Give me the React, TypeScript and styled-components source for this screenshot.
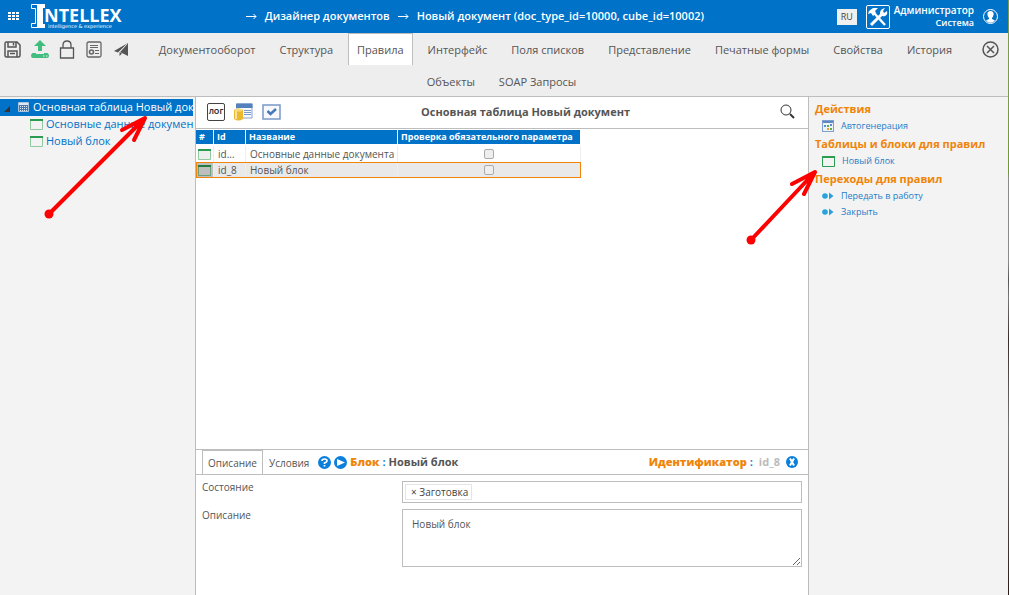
import React from "react";
import styled, { createGlobalStyle, css } from "styled-components";

const BLUE = "#0072c8";
const ORANGE = "#f08408";
const LINE = "#bdbdbd";

const GlobalStyle = createGlobalStyle`
  *, *::before, *::after { box-sizing: border-box; }
  body { margin: 0; background: #fff; color: #555; font: 10px/16px "Open Sans", "Noto Sans", sans-serif; }
  button, input, textarea { font: inherit; color: inherit; }
  button { padding: 0; border: 0; background: none; cursor: pointer; }
  a { text-decoration: none; color: inherit; }
  svg { display: block; flex: none; }
`;

const Page = styled.div`
  position: relative;
  min-height: 100vh;
  display: flex;
  flex-direction: column;
  overflow: hidden;
  border-right: 1px solid #808080;
  border-image: linear-gradient(#7d9c4a 0 15%, #6f9a2c 29%, #8a8a8a 30% 44%, #555 47%, #777 50%, #3a2c28 57%, #777 72%, #2c1a16 100%) 1;
`;

const Header = styled.header`
  display: flex;
  align-items: center;
  height: 33px;
  padding: 0 10px 0 7px;
  background: ${BLUE};
  color: #fff;
`;

const IconButton = styled.button`
  display: flex;
  align-items: center;
  justify-content: center;
`;

const Logo = styled.a`
  display: block;
  margin-left: 10px;
`;

const Crumbs = styled.nav`
  flex: 1;
  display: flex;
  justify-content: center;
  align-items: center;
  gap: 8px;
  padding: 0 10px 2px 0;
  font-size: 11px;
  font-weight: 600;
  white-space: nowrap;
`;

const Language = styled.button`
  width: 20px;
  height: 16px;
  margin-right: 9px;
  background: #f0f0f0;
  color: #444;
  font-size: 9px;
  line-height: 14px;
`;

const User = styled.div`
  margin: 0 9px 0 4px;
  text-align: right;
  font-size: 9px;
  line-height: 13px;
  font-weight: 600;
  strong { display: block; font-size: 10px; line-height: 12px; font-weight: 600; }
`;

const Toolbar = styled.div`
  height: 64px;
  padding: 0 8px 0 3px;
  background: #eee;
  border-bottom: 1px solid ${LINE};
`;

const Tools = styled.div<{ $side: "left" | "right" }>`
  float: ${(p) => p.$side};
  display: flex;
  gap: 8px;
  padding: 6px 0 0 0;
`;

const Tool = styled(IconButton)`
  width: 19px;
  height: 20px;
`;

const Tabs = styled.nav`
  text-align: center;
  font-size: 0;
`;

const Tab = styled.a<{ $active?: boolean }>`
  display: inline-block;
  vertical-align: top;
  height: 32px;
  padding: 0 8px;
  margin: 0 3px;
  border: 1px solid transparent;
  border-bottom: 0;
  font-size: 11px;
  line-height: 32px;
  white-space: nowrap;
  ${(p) => p.$active && css`background: #fff; border-color: ${LINE};`}
`;

const Body = styled.div`
  flex: 1;
  display: grid;
  grid-template-columns: 195px minmax(0, 1fr) 199px;
`;

const Tree = styled.aside`
  padding: 2px 2px 0 0;
  background: #f3f3f3;
`;

const TreeRow = styled.a<{ $selected?: boolean }>`
  display: flex;
  align-items: center;
  height: 17px;
  padding: 0 0 1px ${(p) => (p.$selected ? 4 : 30)}px;
  font-size: 11px;
  white-space: nowrap;
  color: ${BLUE};
  gap: 3px;
  ${(p) => p.$selected && css`background: ${BLUE}; color: #fff; font-weight: 500;`}
`;

const Main = styled.main`
  display: flex;
  flex-direction: column;
  border: solid ${LINE};
  border-width: 0 1px;
`;

const MainBar = styled.div`
  display: flex;
  align-items: center;
  height: 32px;
  padding: 0 13px 2px 11px;
  gap: 9px;
  border-bottom: 1px solid ${LINE};
`;

const Title = styled.h1`
  flex: 1;
  margin: 0;
  padding-right: 10px;
  text-align: center;
  font-size: 11px;
  font-weight: 700;
`;

const LogButton = styled.button`
  width: 18px;
  height: 18px;
  border: 1px solid #444;
  border-radius: 2px;
  background: #fff;
  color: #333;
  font-size: 7px;
  line-height: 14px;
  font-weight: 700;
`;

const Table = styled.table`
  width: 385px;
  margin-top: 1px;
  table-layout: fixed;
  border-collapse: separate;
  border-spacing: 0;
  text-align: left;
`;

const Th = styled.th<{ $w: number }>`
  width: ${(p) => p.$w}px;
  height: 16px;
  padding: 0 0 0 3px;
  background: ${BLUE};
  border: solid #fff;
  border-width: 0 1px 2px 0;
  color: #fff;
  font-size: 9px;
  font-weight: 700;
  line-height: 14px;
  white-space: nowrap;
`;

const Td = styled.td<{ $center?: boolean }>`
  height: 16px;
  padding: 0 0 0 4px;
  border-right: 1px solid #eee;
  line-height: 14px;
  white-space: nowrap;
  text-align: ${(p) => (p.$center ? "center" : "left")};
`;

const Tr = styled.tr<{ $selected?: boolean }>`
  td:first-child { padding-left: 2px; }
  td:last-child { padding: 0; }
  ${(p) => p.$selected && css`
    background: #e9e9e9;
    outline: 1px solid ${ORANGE};
    outline-offset: -1px;
    td:first-child { background: #bebebe; }
  `}
`;

const Check = styled.input`
  appearance: none;
  display: block;
  width: 10px;
  height: 10px;
  margin: 0 auto;
  border: 1px solid #aaa;
  border-radius: 2px;
  background: #eee;
`;

const Details = styled.section`
  margin-top: auto;
  height: 146px;
  border-top: 1px solid ${LINE};
`;

const DetailsBar = styled.div`
  display: flex;
  align-items: center;
  height: 25px;
  padding: 0 10px 0 6px;
  border-bottom: 1px solid ${LINE};
`;

const DetailTab = styled.button<{ $active?: boolean }>`
  align-self: stretch;
  padding: 0 5px;
  border: 1px solid ${(p) => (p.$active ? LINE : "transparent")};
  border-bottom: 0;
`;

const Heading = styled.h2`
  display: flex;
  flex: 1;
  align-items: center;
  gap: 3px;
  margin: 0 0 0 3px;
  font-size: 11px;
  b { color: ${ORANGE}; }
  i { font-style: normal; color: #1684dc; }
`;

const Identifier = styled.div`
  display: flex;
  align-items: center;
  gap: 3px;
  margin-right: 6px;
  font-size: 11px;
  font-weight: 700;
  color: #bbb;
  b { color: ${ORANGE}; }
  i { font-style: normal; color: #1684dc; margin-right: 3px; }
`;

const Field = styled.div`
  display: grid;
  grid-template-columns: 200px minmax(0, 1fr);
  margin: 6px 6px 0;
`;

const Label = styled.label`
  line-height: 13px;
`;

const TagBox = styled.div`
  display: flex;
  height: 22px;
  padding: 2px;
  border: 1px solid ${LINE};
`;

const Tag = styled.button`
  padding: 0 3px 0 5px;
  border: 1px solid #e4e4e4;
  line-height: 14px;
  color: #444;
`;

const TagInput = styled.input`
  flex: 1;
  min-width: 0;
  border: 0;
  outline: 0;
`;

const TextArea = styled.textarea`
  display: block;
  width: 100%;
  height: 58px;
  padding: 6px 9px;
  border: 1px solid ${LINE};
  resize: vertical;
`;

const Side = styled.aside`
  padding: 2px 6px;
  background: #f3f3f3;
`;

const SideTitle = styled.h2`
  margin: 0;
  font-size: 11px;
  line-height: 19px;
  color: ${ORANGE};
  white-space: nowrap;
`;

const SideLink = styled.a`
  display: flex;
  align-items: center;
  gap: 7px;
  height: 16px;
  padding-left: 7px;
  font-size: 9px;
  color: #267cc8;
`;

const Overlay = styled.svg<{ $x: number; $y: number }>`
  position: absolute;
  left: ${(p) => p.$x}px;
  top: ${(p) => p.$y}px;
  pointer-events: none;
`;

const Block = ({ edge = "#8fcb9f", fill = "none", bar = "#2a9d50" }) => (
  <svg width="13" height="12" viewBox="0 0 13 12">
    <path d="M.5 2V11.500H12.500V2" fill={fill} stroke={edge} />
    <path d="M0 1H13V3H0Z" fill={bar} />
  </svg>
);

const Go = () => (
  <svg width="12" height="10" viewBox="0 0 12 10">
    <circle cx="3" cy="5" r="2.800" fill="#25a4d9" />
    <path d="M7 1.500L11.500 5L7 8.500Z" fill="#2a9fd8" />
  </svg>
);

const Arrow = () => (
  <svg width="11" height="8" viewBox="0 0 11 8" fill="none" stroke="#fff">
    <path d="M0 4.500H10M7.500 2L10 4.500L7.500 7" />
  </svg>
);

const Pointer = ({ x, y, w, h }: { x: number; y: number; w: number; h: number }) => (
  <Overlay $x={x} $y={y} width={w + 10} height={h + 10} stroke="red" fill="none">
    <circle cx="5" cy={h + 5} r="4.500" fill="red" stroke="none" />
    <path d={`M5 ${h + 5}L${w + 4} 6M${w - 18} 17L${w + 5} 5L${w - 6} 27`} strokeWidth="4" strokeLinecap="round" strokeLinejoin="round" />
  </Overlay>
);

const tabs = ["Документооборот", "Структура", "Правила", "Интерфейс", "Поля списков", "Представление", "Печатные формы", "Свойства", "История", "Объекты", "SOAP Запросы"];

export default function App() {
  return (
    <Page>
      <GlobalStyle />
      <Header>
        <IconButton aria-label="Меню">
          <svg width="13" height="11" viewBox="0 0 13 11" fill="#fff">
            {[0, 3, 6].map((y) => [1, 5, 9].map((x) => <rect key={`${x}-${y}`} x={x} y={y + 1} width="3" height="2" />))}
          </svg>
        </IconButton>
        <Logo href="#" aria-label="Intellex">
          <svg width="93" height="27" viewBox="0 0 93 27" fill="#fff">
            <path d="M7 1H15V5H13V21H15V25H7Z" />
            <path d="M7 1.500H1.500V5.500H5.500V20.500H1.500V24.500H7" fill="none" stroke="#fff" />
            <text x="14" y="19" fontFamily="Open Sans, sans-serif" fontSize="18" fontWeight="700">NTELLEX</text>
            <text x="18" y="25" fontFamily="DejaVu Sans, sans-serif" fontSize="5">intelligence &amp; experience</text>
          </svg>
        </Logo>
        <Crumbs>
          <Arrow /><a href="#">Дизайнер документов</a>
          <Arrow /><a href="#">Новый документ (doc_type_id=10000, cube_id=10002)</a>
        </Crumbs>
        <Language>RU</Language>
        <IconButton aria-label="Настройки">
          <svg width="24" height="24" viewBox="0 0 24 24" fill="none" stroke="#fff">
            <rect x=".5" y=".5" width="23" height="23" rx="1.500" />
            <path d="M8 8L19 20" strokeWidth="2.500" />
            <path d="M17 8L5 20" strokeWidth="3" />
            <path d="M2 9L3 6L7 3L12 3L9 6L10 8L7 11L5 8Z" fill="#fff" stroke="none" />
            <path d="M19 3L17 6L18 8L21 6Q22 10 19 11Q15 12 14 8Q14 4 19 3Z" fill="#fff" stroke="none" />
          </svg>
        </IconButton>
        <User><strong>Администратор</strong>Система</User>
        <IconButton aria-label="Профиль">
          <svg width="15" height="15" viewBox="0 0 15 15">
            <circle cx="7.500" cy="7.500" r="7" fill="none" stroke="#fff" />
            <path d="M7.500 2C10 2 11 4 10.500 6Q10 8 9 9V10L12 11.500Q7.500 16 3 11.500L6 10V9Q5 8 4.500 6C4 4 5 2 7.500 2Z" fill="#fff" />
          </svg>
        </IconButton>
      </Header>

      <Toolbar>
        <Tools $side="left">
          <Tool aria-label="Сохранить">
            <svg width="17" height="17" viewBox="0 0 17 17" fill="none" stroke="#555" strokeWidth="1.500">
              <path d="M2.500 1H13L16 4V14.500Q16 16 14.500 16H2.500Q1 16 1 14.500V2.500Q1 1 2.500 1ZM4 1V6H12V1M4 16V10H13V16M9.500 2V4.500M6 12.500H11" />
            </svg>
          </Tool>
          <Tool aria-label="Загрузить">
            <svg width="18" height="18" viewBox="0 0 18 18" fill="#42bd80">
              <path d="M9 0L15 6H11V11H7V6H3Z" />
              <path d="M1.500 13H5V14H13V13H16.500Q18 14 18 15.500Q18 18 16 18H2Q0 18 0 15.500Q0 14 1.500 13Z" />
              <path d="M12 16H13.500M15 16H16.500" stroke="#eee" />
            </svg>
          </Tool>
          <Tool aria-label="Заблокировать">
            <svg width="16" height="19" viewBox="0 0 16 19" fill="none" stroke="#555" strokeWidth="1.300">
              <path d="M1.500 8H14.500V18H1.500ZM4 8V5Q4 1 8 1Q12 1 12 5V8" />
            </svg>
          </Tool>
          <Tool aria-label="Документ">
            <svg width="16" height="17" viewBox="0 0 16 17" fill="none" stroke="#666">
              <rect x="1" y="1" width="14" height="15" rx="1.500" strokeWidth="1.300" />
              <path d="M4 4.500H12M4 6.500H12M9 9.500H13M9 12.500H13" />
              <circle cx="5.500" cy="11" r="2" strokeWidth="1.600" />
            </svg>
          </Tool>
          <Tool aria-label="Отправить">
            <svg width="16" height="15" viewBox="0 0 16 15">
              <path d="M15 1L7 10L15 14Z" fill="#555" />
              <path d="M6.500 10V14L9 11.500" fill="#555" />
              <path d="M15 1L1 9L5 10.500Z" fill="#555" />
              <path d="M14 2L6 10.500" fill="none" stroke="#eee" strokeWidth=".800" />
            </svg>
          </Tool>
        </Tools>
        <Tools $side="right">
          <Tool aria-label="Закрыть">
            <svg width="17" height="17" viewBox="0 0 17 17" fill="none" stroke="#555" strokeWidth="1.500">
              <circle cx="8.500" cy="8.500" r="7.500" /><path d="M5 5L12 12M12 5L5 12" />
            </svg>
          </Tool>
        </Tools>
        <Tabs>{tabs.map((t) => <React.Fragment key={t}><Tab href="#" $active={t === "Правила"}>{t}</Tab> </React.Fragment>)}</Tabs>
      </Toolbar>

      <Body>
        <Tree>
          <TreeRow href="#" $selected>
            <svg width="26" height="12" viewBox="0 0 26 12">
              <path d="M0 11L6 5V11Z" fill="#333" />
              <path d="M14.500 1.500H24.500V10.500H14.500Z" fill="#4a78ac" stroke="#a9c3df" />
              <path d="M15 3H24" stroke="#dce7f2" strokeWidth="2" />
              <path d="M16 5.500H23M16 7.500H23M16 9.500H23" stroke="#dce7f2" strokeDasharray="1 1" />
            </svg>
            Основная таблица Новый док
          </TreeRow>
          <TreeRow href="#"><Block />Основные данные докумен</TreeRow>
          <TreeRow href="#"><Block />Новый блок</TreeRow>
        </Tree>

        <Main>
          <MainBar>
            <LogButton>ЛОГ</LogButton>
            <IconButton aria-label="Данные">
              <svg width="19" height="18" viewBox="0 0 19 18">
                <path d="M3 1H18V15H3Z" fill="#f6f8fb" stroke="#87a4cd" />
                <path d="M2 .500H18.500V5H2Z" fill="#5480bd" />
                <path d="M10 7.500H17M10 9.500H17M10 11.500H17" stroke="#7c9dcb" />
                <path d="M0 7Q4.500 4 9 7V16Q4.500 19 0 16Z" fill="#edb72e" />
                <path d="M2 8V16" stroke="#fae5a0" strokeWidth="2" />
                <ellipse cx="4.500" cy="7" rx="4" ry="1.500" fill="#f8db81" />
              </svg>
            </IconButton>
            <IconButton aria-label="Проверить">
              <svg width="19" height="16" viewBox="0 0 19 16" fill="none" stroke="#7898c8">
                <rect x="1" y="1" width="17" height="14" fill="#f7f9fc" strokeWidth="1.500" />
                <path d="M5.500 7L8.500 10L14 5" stroke="#4978b8" strokeWidth="2.500" />
              </svg>
            </IconButton>
            <Title>Основная таблица Новый документ</Title>
            <IconButton aria-label="Поиск">
              <svg width="15" height="15" viewBox="0 0 15 15" fill="none" stroke="#333">
                <circle cx="6" cy="6" r="5" /><path d="M10 10L14 14" strokeWidth="2" />
              </svg>
            </IconButton>
          </MainBar>
          <Table>
            <thead><tr><Th $w={18}>#</Th><Th $w={32}>Id</Th><Th $w={152}>Название</Th><Th $w={183}>Проверка обязательного параметра</Th></tr></thead>
            <tbody>
              <Tr><Td><Block fill="#eee" /></Td><Td>id...</Td><Td>Основные данные документа</Td><Td $center><Check type="checkbox" aria-label="Основные данные документа" /></Td></Tr>
              <Tr $selected><Td><Block fill="#bebebe" edge="#6a9f78" bar="#217c40" /></Td><Td>id_8</Td><Td>Новый блок</Td><Td $center><Check type="checkbox" aria-label="Новый блок" /></Td></Tr>
            </tbody>
          </Table>
          <Details>
            <DetailsBar>
              <DetailTab $active>Описание</DetailTab>
              <DetailTab>Условия</DetailTab>
              <Heading>
                <svg width="13" height="13" viewBox="0 0 13 13"><circle cx="6.500" cy="6.500" r="6.500" fill="#0b7fdc" /><path d="M4 5Q4 3 6.500 3Q9 3 9 5Q9 6 6.500 7V8M6.500 9V10.500" fill="none" stroke="#fff" strokeWidth="1.700" /></svg>
                <svg width="13" height="13" viewBox="0 0 13 13"><circle cx="6.500" cy="6.500" r="6.500" fill="#0b7fdc" /><path d="M3 3L11 6.500L3 10Z" fill="#fff" /></svg>
                <b>Блок</b><i>:</i>Новый блок
              </Heading>
              <Identifier><b>Идентификатор</b><i>:</i>id_8</Identifier>
              <IconButton aria-label="Закрыть">
                <svg width="12" height="12" viewBox="0 0 12 12"><circle cx="6" cy="6" r="6" fill="#0b7fdc" /><path d="M4 2.500L8 9.500M8 2.500L4 9.500" stroke="#fff" strokeWidth="2" /></svg>
              </IconButton>
            </DetailsBar>
            <Field>
              <Label htmlFor="state">Состояние</Label>
              <TagBox><Tag>× Заготовка</Tag><TagInput id="state" /></TagBox>
            </Field>
            <Field>
              <Label htmlFor="description">Описание</Label>
              <TextArea id="description" defaultValue="Новый блок" />
            </Field>
          </Details>
        </Main>

        <Side>
          <SideTitle>Действия</SideTitle>
          <SideLink href="#">
            <svg width="12" height="12" viewBox="0 0 12 12">
              <rect x=".5" y=".5" width="11" height="11" fill="#eef3fa" stroke="#7da0cc" /><path d="M1 2H11" stroke="#5c87c0" strokeWidth="2" />
              <path d="M2 5H4V7H2ZM8 4H10V6H8Z" fill="#5b8dce" /><path d="M5 5H7V7H5ZM8 8H10V10H8Z" fill="#5aaf4a" /><path d="M5 8H7V10H5Z" fill="#ee9b30" />
            </svg>
            Автогенерация
          </SideLink>
          <SideTitle>Таблицы и блоки для правил</SideTitle>
          <SideLink href="#"><Block edge="#2a9d50" />Новый блок</SideLink>
          <SideTitle>Переходы для правил</SideTitle>
          <SideLink href="#"><Go />Передать в работу</SideLink>
          <SideLink href="#"><Go />Закрыть</SideLink>
        </Side>
      </Body>
      <Pointer x={44} y={113} w={96} h={96} />
      <Pointer x={746} y={167} w={64} h={68} />
    </Page>
  );
}
